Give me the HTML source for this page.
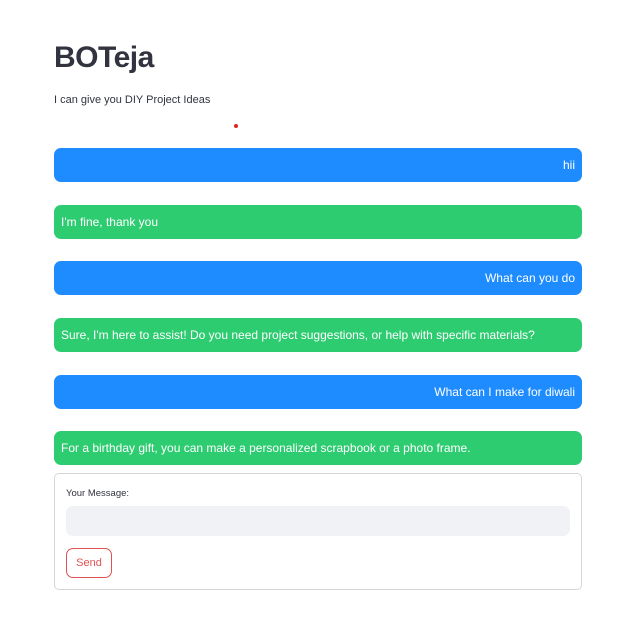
<!DOCTYPE html>
<html><head><style>
body{margin:0;background:#fff;width:630px;height:624px;position:relative;font-family:"Liberation Sans",sans-serif;}
h1{position:absolute;left:54px;top:38px;margin:0;font-size:30px;font-weight:700;color:#31333f;line-height:40px;letter-spacing:-0.5px;}
.sub{position:absolute;left:54px;top:94px;font-size:11px;color:#31333f;}
.dot{position:absolute;left:234px;top:124px;width:4px;height:4px;border-radius:2px;background:#d22;}
.b{position:absolute;left:54px;width:528px;height:34px;border-radius:7px;color:#fff;font-size:12px;line-height:34px;box-sizing:border-box;padding:0 7px;}
.u{background:#1e8cff;text-align:right;}
.a{background:#2ecc71;}
.form{position:absolute;left:54px;top:473px;width:528px;height:117px;box-sizing:border-box;border:1px solid #d6d6d9;border-radius:5px;}
.lbl{position:absolute;left:11px;top:14px;font-size:9.5px;color:#31333f;}
.inp{position:absolute;left:11px;top:32px;width:504px;height:30px;background:#f0f2f6;border-radius:7px;}
.btn{position:absolute;left:11px;top:74px;width:46px;height:30px;box-sizing:border-box;border:1px solid #e05252;border-radius:7px;color:#e05252;font-size:11px;text-align:center;line-height:28px;}
</style></head><body>
<h1>BOTeja</h1>
<div class="sub">I can give you DIY Project Ideas</div>
<div class="dot"></div>
<div class="b u" style="top:148px">hii</div>
<div class="b a" style="top:205px">I'm fine, thank you</div>
<div class="b u" style="top:261px">What can you do</div>
<div class="b a" style="top:318px">Sure, I'm here to assist! Do you need project suggestions, or help with specific materials?</div>
<div class="b u" style="top:375px">What can I make for diwali</div>
<div class="b a" style="top:431px">For a birthday gift, you can make a personalized scrapbook or a photo frame.</div>
<div class="form"><div class="lbl">Your Message:</div><div class="inp"></div><div class="btn">Send</div></div>
</body></html>
